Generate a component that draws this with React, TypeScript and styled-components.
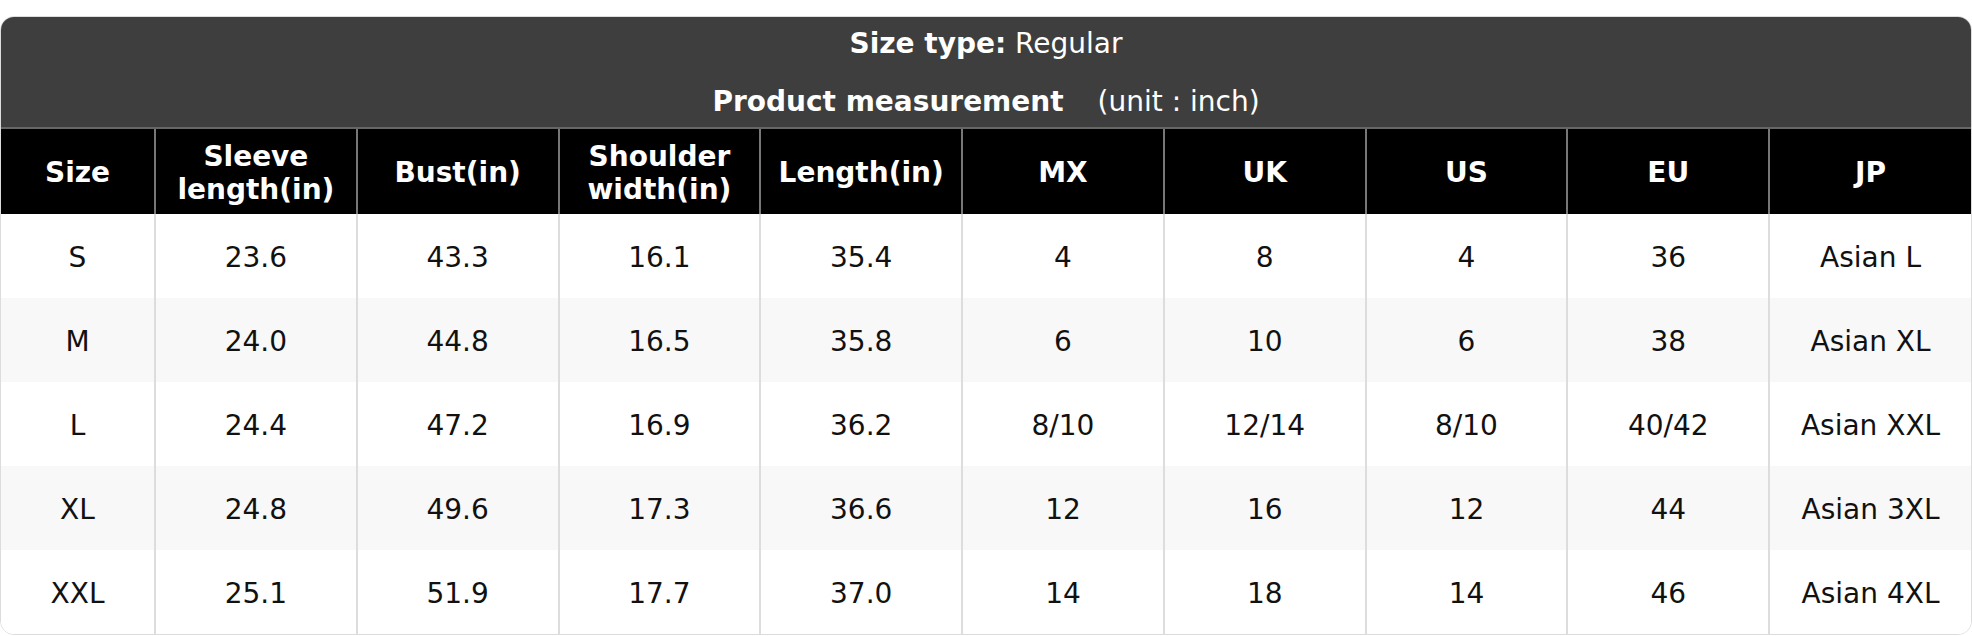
import React from 'react';
import { styled, createGlobalStyle } from 'styled-components';

type Row = string[];

const columns = [
  'Size',
  'Sleeve length(in)',
  'Bust(in)',
  'Shoulder width(in)',
  'Length(in)',
  'MX',
  'UK',
  'US',
  'EU',
  'JP',
];

const rows: Row[] = [
  ['S', '23.6', '43.3', '16.1', '35.4', '4', '8', '4', '36', 'Asian L'],
  ['M', '24.0', '44.8', '16.5', '35.8', '6', '10', '6', '38', 'Asian XL'],
  ['L', '24.4', '47.2', '16.9', '36.2', '8/10', '12/14', '8/10', '40/42', 'Asian XXL'],
  ['XL', '24.8', '49.6', '17.3', '36.6', '12', '16', '12', '44', 'Asian 3XL'],
  ['XXL', '25.1', '51.9', '17.7', '37.0', '14', '18', '14', '46', 'Asian 4XL'],
];

const App: React.FC = () => {
  return (
    <>
      <GlobalStyle />
      <Card>
        <Title>
          <TitleLine>
            <b>Size type:</b> Regular
          </TitleLine>
          <TitleLine>
            <b>Product measurement</b>
            <Unit>(unit : inch)</Unit>
          </TitleLine>
        </Title>
        <Table>
          <colgroup>
            <col style={{ width: 154 }} />
            {columns.slice(1).map((c) => (
              <col key={c} />
            ))}
          </colgroup>
          <thead>
            <tr>
              {columns.map((c) => (
                <Th key={c}>{c}</Th>
              ))}
            </tr>
          </thead>
          <tbody>
            {rows.map((r, i) => (
              <Tr key={r[0]} $striped={i % 2 === 1}>
                {r.map((v, j) => (
                  <Td key={j}>{v}</Td>
                ))}
              </Tr>
            ))}
          </tbody>
        </Table>
      </Card>
    </>
  );
};

const GlobalStyle = createGlobalStyle`
  html, body {
    margin: 0;
    padding: 0;
    background: #fff;
  }
  body {
    font-family: "DejaVu Sans", Verdana, sans-serif;
  }
`;

const Card = styled.div`
  margin-top: 16px;
  width: 1972px;
  box-sizing: border-box;
  border: 1px solid #dcdcdc;
  border-radius: 14px;
  overflow: hidden;
  background: #fff;
`;

const Title = styled.div`
  background: #3e3e3e;
  color: #fff;
  text-align: center;
  padding: 9px 0 7px;
  display: flex;
  flex-direction: column;
  gap: 22px;
  border-bottom: 2px solid #666;
`;

const TitleLine = styled.div`
  font-size: 28px;
  line-height: 36px;
`;

const Unit = styled.span`
  margin-left: 34px;
`;

const Table = styled.table`
  width: 100%;
  border-collapse: collapse;
  table-layout: fixed;
`;

const Th = styled.th`
  background: #000;
  color: #fff;
  font-size: 28px;
  font-weight: 700;
  line-height: 33px;
  height: 85px;
  padding: 2px 12px 0;
  box-sizing: border-box;
  border-left: 2px solid #777;
  &:first-child {
    border-left: none;
  }
`;

const Tr = styled.tr<{ $striped: boolean }>`
  background: ${(p) => (p.$striped ? '#f8f8f8' : '#fff')};
`;

const Td = styled.td`
  font-size: 28px;
  color: #111;
  text-align: center;
  height: 84px;
  padding: 2px 0 0;
  box-sizing: border-box;
  border-left: 2px solid #dddddd;
  &:first-child {
    border-left: none;
  }
`;

export default App;
